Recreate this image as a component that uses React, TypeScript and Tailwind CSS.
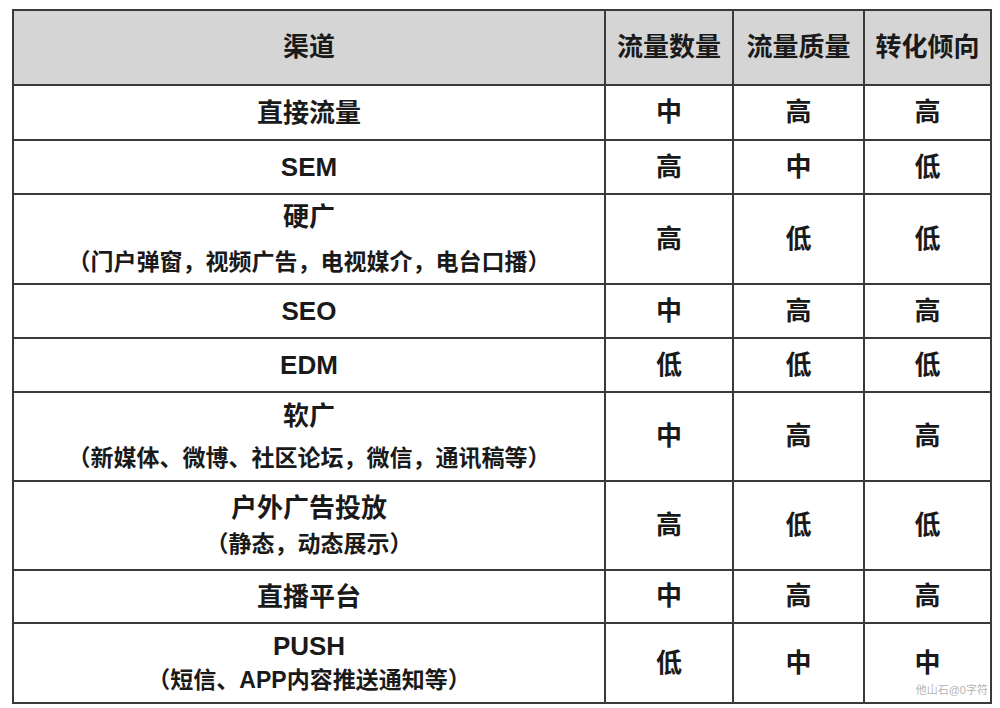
import React from "react";

type Row = {
  name: string;
  sub?: string;
  volume: string;
  quality: string;
  conversion: string;
  h: string;
  gap?: string;
};

const rows: Row[] = [
  { name: "直接流量", volume: "中", quality: "高", conversion: "高", h: "h-[55px]" },
  { name: "SEM", volume: "高", quality: "中", conversion: "低", h: "h-[54px]" },
  { name: "硬广", sub: "（门户弹窗，视频广告，电视媒介，电台口播）", volume: "高", quality: "低", conversion: "低", h: "h-[90px]", gap: "mt-[11px]" },
  { name: "SEO", volume: "中", quality: "高", conversion: "高", h: "h-[54px]" },
  { name: "EDM", volume: "低", quality: "低", conversion: "低", h: "h-[54px]" },
  { name: "软广", sub: "（新媒体、微博、社区论坛，微信，通讯稿等）", volume: "中", quality: "高", conversion: "高", h: "h-[89px]", gap: "mt-[8px]" },
  { name: "户外广告投放", sub: "（静态，动态展示）", volume: "高", quality: "低", conversion: "低", h: "h-[89px]", gap: "mt-[2px]" },
  { name: "直播平台", volume: "中", quality: "高", conversion: "高", h: "h-[53px]" },
  { name: "PUSH", sub: "（短信、APP内容推送通知等）", volume: "低", quality: "中", conversion: "中", h: "h-[80px]", gap: "mt-0" },
];

const cell = "border-2 border-[#3a3a3a] text-center align-middle";

export default function App() {
  return (
    <div className="relative w-[1000px] h-[708px] bg-white font-['Liberation_Sans','Noto_Sans_CJK_SC',sans-serif] text-[#1a1a1a]">
      <div className="pl-[12px] pt-[9px]">
        <table className="border-collapse border-2 border-[#2a2a2a] w-[978px] table-fixed">
          <colgroup>
            <col className="w-[592px]" />
            <col className="w-[128px]" />
            <col className="w-[131px]" />
            <col className="w-[127px]" />
          </colgroup>
          <thead>
            <tr className="h-[75px] bg-[#d5d5d5]">
              <th className={`${cell} text-[26px] font-bold`}>渠道</th>
              <th className={`${cell} text-[26px] font-bold`}>流量数量</th>
              <th className={`${cell} text-[26px] font-bold`}>流量质量</th>
              <th className={`${cell} text-[26px] font-bold`}>转化倾向</th>
            </tr>
          </thead>
          <tbody>
            {rows.map((r) => (
              <tr key={r.name} className={r.h}>
                <td className={cell}>
                  <div className="text-[26px] font-bold leading-[34px]">{r.name}</div>
                  {r.sub && <div className={`text-[23px] font-bold leading-[34px] ${r.gap}`}>{r.sub}</div>}
                </td>
                <td className={`${cell} text-[26px] font-bold`}>{r.volume}</td>
                <td className={`${cell} text-[26px] font-bold`}>{r.quality}</td>
                <td className={`${cell} text-[26px] font-bold`}>{r.conversion}</td>
              </tr>
            ))}
          </tbody>
        </table>
      </div>
      <div className="absolute right-[12px] bottom-[10px] text-[11px] text-[#b5b5b5]">他山石@0字符</div>
    </div>
  );
}
